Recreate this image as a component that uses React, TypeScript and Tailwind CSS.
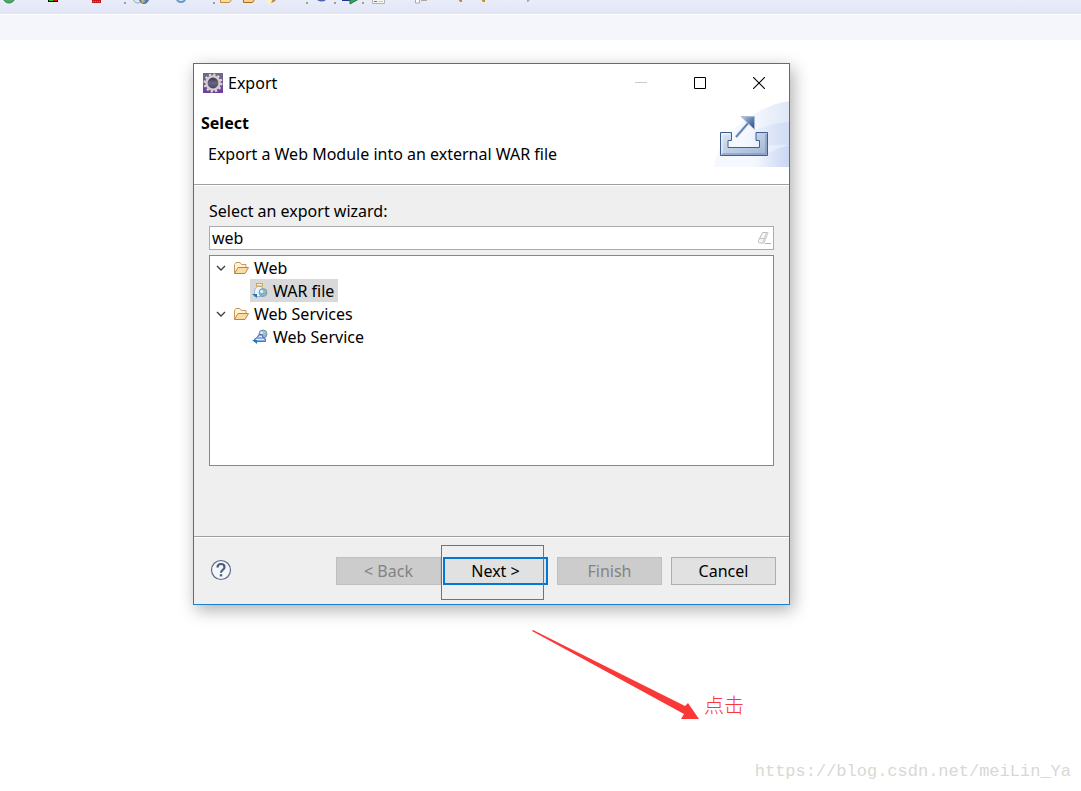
import React, { useState } from "react";

function ToolbarIcons() {
  return (
    <svg width="560" height="14" viewBox="0 0 560 14" className="block" aria-hidden="true">
      <circle cx="9" cy="-3" r="6" fill="#4fa866" stroke="#2b8248" />
      <rect x="48" y="-8" width="10" height="10" fill="#000" />
      <rect x="49" y="-1" width="4" height="2" fill="#12d012" />
      <rect x="53" y="-1" width="4" height="2" fill="#e01010" />
      <rect x="92" y="-6" width="9" height="9" fill="#c4161c" />
      <path d="M93 1.5h7" stroke="#e66" strokeDasharray="1 1" />
      <path d="M124 2h2v2h-2zM213 2h2v2h-2zM306 2h2v2h-2zM334 2h2v2h-2zM362 2h2v2h-2z" fill="#a39a90" />
      <circle cx="138" cy="-2" r="5" fill="#dceaf2" stroke="#8fa9b8" />
      <circle cx="144" cy="-1" r="4.5" fill="#4f7fb8" stroke="#586b8a" />
      <path d="M141 0l3-1 1 3-3 1z" fill="#c9b36a" />
      <circle cx="181" cy="-2.500" r="4.500" fill="#d8e6f6" stroke="#6698cc" strokeWidth="2" />
      <path d="M220.500-3v5.500h9l4-5.500z" fill="#fbdc9c" stroke="#c58a3c" />
      <path d="M243.500-3v5.500h9l4-5.500z" fill="#fbd58a" stroke="#a8691c" />
      <path d="M267 0h6v2l-3 2h-3z" fill="#fff3b4" />
      <path d="M271 3l3-1 4-4-4-2z" fill="#b98a58" />
      <path d="M317 0q5 3 9 0v-2h-9z" fill="#4a66b0" />
      <path d="M342 0h8v1h-8z" fill="#26358c" />
      <path d="M350 4v-8l9 3z" fill="#36a160" stroke="#1d7f43" />
      <path d="M372.500-3v6.500h12v-6.500z" fill="#f6f6f2" stroke="#b5b5b0" />
      <path d="M374 1.500h3" stroke="#777" />
      <path d="M378 1.500h5" stroke="#ccc" />
      <path d="M415.500-3v6h4v-6z" fill="#fff" stroke="#aaa" />
      <path d="M421 .500h6" stroke="#aaa" />
      <path d="M458-1h4v3h-2zM481-1h4v3h-2z" fill="#c9872f" />
      <path d="M527-1h4l-3 3h-1z" fill="#aaa" />
    </svg>
  );
}

function EclipseIcon() {
  return (
    <svg width="20" height="20" viewBox="0 0 20 20" aria-hidden="true">
      <defs>
        <linearGradient id="ecl-bg" x1="0" y1="0" x2="0" y2="1">
          <stop offset="0" stopColor="#75688a" />
          <stop offset="1" stopColor="#6c3fa0" />
        </linearGradient>
        <linearGradient id="ecl-core" x1="0" y1="0" x2="0" y2="1">
          <stop offset="0" stopColor="#31293f" />
          <stop offset=".5" stopColor="#6a6484" />
          <stop offset="1" stopColor="#453660" />
        </linearGradient>
      </defs>
      <rect width="20" height="20" fill="url(#ecl-bg)" />
      <circle cx="10" cy="10" r="8.300" fill="none" stroke="#dcd8d6" strokeWidth="2.400" strokeDasharray="2.200 2.145" />
      <circle cx="10" cy="10" r="6.600" fill="url(#ecl-core)" stroke="#d2cecb" strokeWidth="2.400" />
    </svg>
  );
}

function ExportBanner() {
  return (
    <svg width="75" height="66" viewBox="0 0 75 66" className="block" aria-hidden="true">
      <defs>
        <linearGradient id="swoosh" x1="0" y1="0" x2="1" y2="0">
          <stop offset="0" stopColor="#f6f8fe" />
          <stop offset=".5" stopColor="#f5f8fe" />
          <stop offset="1" stopColor="#dfe7f8" />
        </linearGradient>
        <linearGradient id="band" x1="0" y1="0" x2="1" y2="0">
          <stop offset=".3" stopColor="#d3dff6" stopOpacity="0" />
          <stop offset="1" stopColor="#cbd8f3" />
        </linearGradient>
        <linearGradient id="tray" x1="0" y1="0" x2="1" y2="1">
          <stop offset="0" stopColor="#dfe8f3" />
          <stop offset="1" stopColor="#9fb3d4" />
        </linearGradient>
        <linearGradient id="arrow" x1="0" y1="0" x2="1" y2="1">
          <stop offset="0" stopColor="#c4d3e5" />
          <stop offset=".5" stopColor="#6583b4" />
          <stop offset="1" stopColor="#284a85" />
        </linearGradient>
      </defs>
      <path d="M0 66Q4 42 22 26Q46 5 75 0V66z" fill="url(#swoosh)" />
      <path d="M22 40Q44 23 75 21V44Q45 42 10 60z" fill="url(#band)" opacity=".7" />
      <path d="M30 66Q52 50 75 44V66z" fill="url(#band)" />
      <path d="M6.500 31.500H17.500V39.500H14V46.500H45.500V39.500H42V31.500H53.500V54.500H6.500z" fill="url(#tray)" stroke="#3d5f95" />
      <path d="M8 33h8M8 33v20" stroke="#f5f8fc" fill="none" />
      <path d="M8 53H52V33" stroke="#7590bd" fill="none" />
      <path d="M22 36L35.500 20.500" stroke="#c0cee3" strokeWidth="3.200" />
      <path d="M22 36L35.500 20.500" stroke="#5779ae" strokeWidth="1.500" />
      <path d="M27 15.500H40.500V28.500z" fill="url(#arrow)" stroke="#a7bad6" />
    </svg>
  );
}

function Folder() {
  return (
    <svg width="17" height="14" viewBox="0 0 17 14" aria-hidden="true">
      <path d="M1.500 12V3.500l1.500-2h4l1.500 2h4.500V6" fill="#fff3d6" stroke="#c9965a" />
      <path d="M1.500 12.500L5 6.500H15.500L12 12.500z" fill="#fbdca4" stroke="#bf8442" strokeLinejoin="round" />
    </svg>
  );
}

function WarIcon() {
  return (
    <svg width="16" height="16" viewBox="0 0 16 16" aria-hidden="true">
      <path d="M5 3.500Q2.500 6 2.500 8v5.500h9V8q0-2-2-4.500z" fill="#eaf2f8" stroke="#9db4c8" />
      <rect x="4.500" y=".500" width="6" height="2.500" fill="#fff0c4" stroke="#cfa74c" />
      <circle cx="11" cy="9.500" r="4" fill="#7fb0dc" stroke="#8494ab" strokeWidth=".8" />
      <path d="M11 6.500q3 0 3 3l-2 1zM11 12l3-1-1 2z" fill="#8cc48c" />
      <circle cx="9.700" cy="8.500" r="1.600" fill="#e7f3fc" />
      <path d="M0 11h5v4z" fill="#1d78b5" />
    </svg>
  );
}

function ServiceIcon() {
  return (
    <svg width="16" height="16" viewBox="0 0 16 16" aria-hidden="true">
      <circle cx="11" cy="5" r="4" fill="#8fb8e0" stroke="#7083a3" strokeWidth=".9" />
      <path d="M11 1.500q3 0 3.500 3l-3 1z" fill="#9bd08f" />
      <circle cx="9.500" cy="3.800" r="1.300" fill="#eaf4fc" />
      <path d="M2.500 12.500V10L5 8.500 7 5.500h3L11 8.500l2.500 1.500v2.500z" fill="#8eabdf" stroke="#4764ad" strokeWidth=".9" />
      <path d="M4 10.500h8M7 7.500h3" stroke="#dfe9fb" />
      <path d="M0 11h5v4z" fill="#1d78b5" />
    </svg>
  );
}

function Chevron() {
  return (
    <svg width="10" height="8" viewBox="0 0 10 8" aria-hidden="true">
      <path d="M1 2l4 4 4-4" fill="none" stroke="#404040" strokeWidth="1.400" />
    </svg>
  );
}

function TreeGroup({ name, child, icon, selected }: { name: string; child: string; icon: React.ReactNode; selected?: boolean }) {
  return (
    <li>
      <div className="flex h-[23px] items-center pl-[5px]">
        <button type="button" aria-label={`Collapse ${name}`} className="mr-[7px] flex w-[11px] justify-center">
          <Chevron />
        </button>
        <Folder />
        <span className="ml-1">{name}</span>
      </div>
      <ul className="pl-10">
        <li className={selected ? "flex h-[23px] w-fit items-center gap-1 bg-[#d9d9d9] pr-1 pl-0.5" : "flex h-[23px] w-fit items-center gap-1 pr-1 pl-0.5"}>
          {icon}
          <span className="pl-px">{child}</span>
        </li>
      </ul>
    </li>
  );
}

export default function App() {
  const [query, setQuery] = useState("web");
  return (
    <div className="flex min-h-screen flex-col bg-white font-['Noto_Sans','Noto_Sans_CJK_SC',sans-serif] text-[16px] leading-[22px] text-black">
      <header>
        <div className="h-[14px] overflow-hidden bg-linear-to-b from-[#e9edf9] to-[#e1e6f6]">
          <ToolbarIcons />
        </div>
        <div className="h-[26px] border-t border-white bg-[#f4f6fb]" />
      </header>

      <main className="relative flex-1 pt-[23px] pl-[193px]">
        <section
          role="dialog"
          aria-label="Export"
          className="w-full max-w-[597px] border border-[#1a80cd] bg-[#efefef] shadow-[3px_5px_16px_rgba(0,0,0,0.32)]"
        >
          <div className="border-b border-[#a0a0a0] bg-white">
            <div className="flex h-[37px] items-center pl-[9px]">
              <EclipseIcon />
              <span className="ml-[5px]">Export</span>
              <div className="ml-auto flex pr-px">
                <button type="button" aria-label="Minimize" disabled className="flex h-9 w-[58px] items-center justify-center">
                  <svg width="12" height="12" viewBox="0 0 12 12"><path d="M0 5.500h12" stroke="#ccc" /></svg>
                </button>
                <button type="button" aria-label="Maximize" className="flex h-9 w-[59px] items-center justify-center">
                  <svg width="12" height="12" viewBox="0 0 12 12"><path d="M.5.5h11v11H.5z" fill="none" stroke="#000" /></svg>
                </button>
                <button type="button" aria-label="Close" className="flex h-9 w-[59px] items-center justify-center">
                  <svg width="12" height="12" viewBox="0 0 12 12"><path d="M0 0l12 12M12 0L0 12" stroke="#000" strokeWidth="1.100" /></svg>
                </button>
              </div>
            </div>
            <div className="flex items-start justify-between pb-[17px]">
              <div className="pt-[11px] pl-[7px]">
                <h1 className="font-bold">Select</h1>
                <p className="mt-[9px] pl-[7px]">Export a Web Module into an external WAR file</p>
              </div>
              <ExportBanner />
            </div>
          </div>

          <div className="border-t border-white px-[15px] pt-[14px] pb-[70px]">
            <label htmlFor="wizard" className="block">Select an export wizard:</label>
            <div className="mt-1 flex h-6 items-center border border-[#ababab] bg-white pr-0.5 pl-0.5">
              <input
                id="wizard"
                value={query}
                onChange={(e) => setQuery(e.target.value)}
                className="min-w-0 flex-1 bg-transparent outline-none"
              />
              <button type="button" aria-label="Clear">
                <svg width="13" height="12" viewBox="0 0 13 12" className="block">
                  <path d="M4.500.5H10L6 11H1.500Q0 10 .500 8.500z" fill="#f6f6f6" stroke="#bcbcbc" />
                  <path d="M8 .5H10.500L6.500 11H4z" fill="#d6d6d6" />
                  <path d="M2 6.500h5" stroke="#c4c4c4" />
                  <path d="M7 11.500h6" stroke="#b2b2b2" />
                </svg>
              </button>
            </div>
            <ul className="mt-[5px] h-[211px] border border-[#828790] bg-white">
              <TreeGroup name="Web" child="WAR file" icon={<WarIcon />} selected />
              <TreeGroup name="Web Services" child="Web Service" icon={<ServiceIcon />} />
            </ul>
          </div>

          <div className="border-t border-[#a0a0a0]">
            <div className="flex items-start border-t border-white pt-[19px] pr-[13px] pb-[19px] pl-4">
              <button type="button" aria-label="Help" className="mt-0.5 mr-auto">
                <svg width="22" height="22" viewBox="0 0 22 22" className="block">
                  <circle cx="11" cy="11" r="9.500" fill="#f5f6f8" stroke="#5a6c8c" strokeWidth="1.200" />
                  <path d="M7.500 8.500Q7.500 5 11 5t3.500 3q0 1.700-1.700 2.800T11 13.800" fill="none" stroke="#4a5d80" strokeWidth="2.200" />
                  <rect x="9.800" y="15.200" width="2.400" height="2.200" fill="#4a5d80" />
                </svg>
              </button>
              <button type="button" disabled className="h-7 w-[105px] border border-[#bfbfbf] bg-[#cccccc] text-[#838383]">&lt; Back</button>
              <div className="relative ml-0.5">
                <button type="button" className="block h-7 w-[105px] border-2 border-[#0078d7] bg-[#e1e1e1]">Next &gt;</button>
                <span aria-hidden="true" className="pointer-events-none absolute -top-3 -left-0.5 h-[55px] w-[103px] border border-[#f03c3c]" />
              </div>
              <button type="button" disabled className="ml-[9px] h-7 w-[105px] border border-[#bfbfbf] bg-[#cccccc] text-[#838383]">Finish</button>
              <button type="button" className="ml-[9px] h-7 w-[105px] border border-[#adadad] bg-[#e1e1e1]">Cancel</button>
            </div>
          </div>
        </section>

        <div className="absolute top-[590px] left-[532px] flex items-start">
          <svg width="167" height="89" viewBox="0 0 167 89" aria-hidden="true">
            <path d="M0 1L1 0 153 76 156 73 167 89H149L152 84z" fill="#fa3838" />
          </svg>
          <span className="mt-[61px] ml-[5px] font-['Noto_Sans_CJK_SC',sans-serif] text-[20px] leading-7 font-light text-[#fa3838]">点击</span>
        </div>
      </main>

      <footer className="pr-2.5 pb-[7px] text-right font-['Liberation_Mono',monospace] text-[17px] leading-6 text-[#d8d8d4]">
        https://blog.csdn.net/meiLin_Ya
      </footer>
    </div>
  );
}
